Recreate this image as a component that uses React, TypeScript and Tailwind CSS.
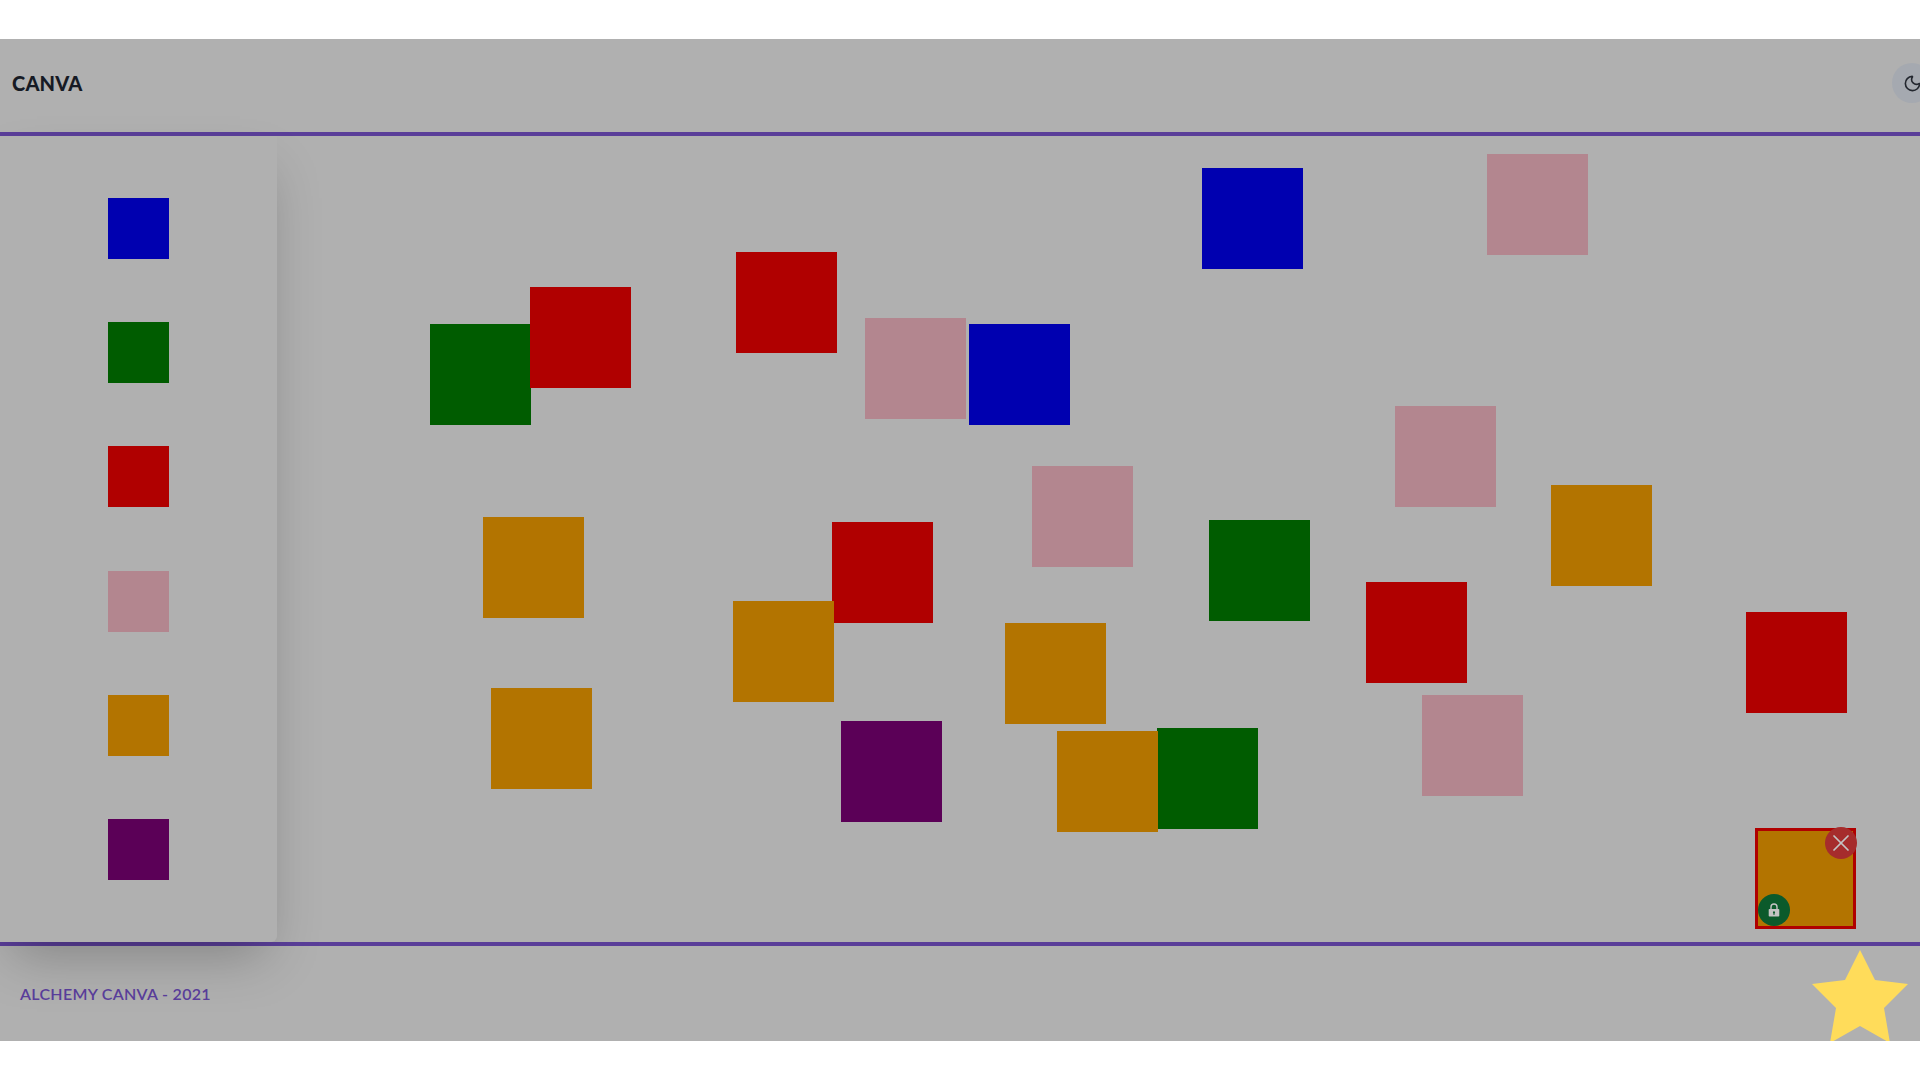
import { Moon, X } from "lucide-react";

const blue = "bg-[#0000b0]";
const green = "bg-[#005c00]";
const red = "bg-[#b00000]";
const pink = "bg-[#b3868f]";
const orange = "bg-[#b37400]";
const purple = "bg-[#5b0057]";

const palette = [blue, green, red, pink, orange, purple];

// placed shapes, x/y are page offsets inside the canvas
const shapes = [
  { x: 1202, y: 32, color: blue },
  { x: 1487, y: 18, color: pink },
  { x: 430, y: 188, color: green },
  { x: 530, y: 151, color: red },
  { x: 736, y: 116, color: red },
  { x: 865, y: 182, color: pink },
  { x: 969, y: 188, color: blue },
  { x: 1395, y: 270, color: pink },
  { x: 1032, y: 330, color: pink },
  { x: 1551, y: 349, color: orange },
  { x: 483, y: 381, color: orange },
  { x: 832, y: 386, color: red },
  { x: 1209, y: 384, color: green },
  { x: 1366, y: 446, color: red },
  { x: 733, y: 465, color: orange },
  { x: 1005, y: 487, color: orange },
  { x: 1746, y: 476, color: red },
  { x: 1422, y: 559, color: pink },
  { x: 491, y: 552, color: orange },
  { x: 841, y: 585, color: purple },
  { x: 1157, y: 592, color: green },
  { x: 1057, y: 595, color: orange },
];

const App = () => {
  return (
    <div className="h-screen w-full overflow-hidden bg-white py-[39px] font-['Lato',sans-serif]">
      <div className="flex h-full flex-col bg-[#b0b0b0]">
        <header className="flex h-[97px] shrink-0 items-center justify-between border-b-4 border-[#5a3e99] pb-[5px] pl-3">
          <span className="text-[20px] font-black tracking-[0.2px] text-[#161a24]">CANVA</span>
          <button className="-mr-3 flex h-10 w-10 items-center justify-center rounded-full bg-[#a5a9b0] text-[#23272f]">
            <Moon size={19} />
          </button>
        </header>

        <main className="relative flex-1">
          <aside className="relative z-10 flex h-full w-[277px] flex-col items-center justify-between rounded-br-md bg-[#b0b0b0] py-[62px] shadow-2xl">
            {palette.map((color, index) => (
              <div key={index} className={`h-[61px] w-[61px] ${color}`} />
            ))}
          </aside>

          {shapes.map((shape, index) => (
            <div
              key={index}
              className={`absolute h-[101px] w-[101px] ${shape.color}`}
              style={{ left: shape.x, top: shape.y }}
            />
          ))}

          <div
            className={`absolute h-[101px] w-[101px] border-[3px] border-[#b00000] ${orange}`}
            style={{ left: 1755, top: 692 }}
          >
            <button className="absolute left-[67px] top-[-4px] flex h-8 w-8 items-center justify-center rounded-full bg-[#a62c2c] text-[#c4c4c4]">
              <X size={28} strokeWidth={1.5} />
            </button>
            <button className="absolute left-0 top-[63px] flex h-8 w-8 items-center justify-center rounded-full bg-[#0b5a2b]">
              <svg width="12" height="14" viewBox="0 0 12 14">
                <path d="M3 6V4a3 3 0 0 1 6 0v2" fill="none" stroke="#c4c4c4" strokeWidth="1.4" />
                <path
                  fillRule="evenodd"
                  fill="#c4c4c4"
                  d="M1.5 6h9a.8.8 0 0 1 .8.8v6a.8.8 0 0 1-.8.8h-9a.8.8 0 0 1-.8-.8v-6a.8.8 0 0 1 .8-.8zM6 8.2a1.1 1.1 0 0 0-.6 2v1.5h1.2v-1.5a1.1 1.1 0 0 0-.6-2z"
                />
              </svg>
            </button>
          </div>
        </main>

        <footer className="flex h-[99px] shrink-0 items-start justify-between overflow-hidden border-t-4 border-[#5a3e99] pl-5 pr-3">
          <span className="mt-[36px] text-[16px] font-semibold tracking-[0.3px] text-[#5a3e9c]">ALCHEMY CANVA - 2021</span>
          <svg width="96" height="95" viewBox="0 0 96 95" className="shrink-0">
            <polygon
              fill="#ffdc5a"
              points="48,4 63,34 96,38 72,62 78,97 48,80 18,97 24,62 0,38 33,34"
            />
          </svg>
        </footer>
      </div>
    </div>
  );
};

export default App;
